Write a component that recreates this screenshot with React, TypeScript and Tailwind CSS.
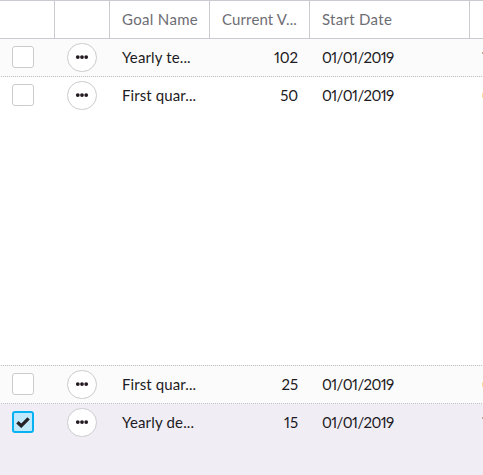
const GRID = "grid grid-cols-[55px_55px_100px_100px_160px_13px] shrink-0";

type RowProps = {
  name: string;
  nameClass: string;
  value: string;
  selected?: boolean;
  tone: string;
  edge: string;
};

function Row({ name, nameClass, value, selected, tone, edge }: RowProps) {
  return (
    <div className={`${GRID} ${tone} items-start text-[#1d1b23]`}>
      <div className="pl-3 pt-[7px]">
        <div
          className={`flex size-[22px] items-center justify-center rounded-[3px] ${
            selected ? "border-2 border-[#08b2f2] bg-[#c0eafc]" : "border border-[#cbcbcf] bg-white"
          }`}
        >
          {selected && (
            <svg className="h-[11px] w-[14px]" viewBox="0 0 14 11" fill="none" stroke="#252229" strokeWidth="3.3">
              <path d="M1.4 5.2 5.2 8.8 12.6 1.4" />
            </svg>
          )}
        </div>
      </div>
      <div className="pl-3 pt-1">
        <div className="flex h-[29px] w-[30px] items-center justify-center rounded-full border border-[#cbcbcf] bg-white">
          <svg className="h-[5px] w-[14px]" viewBox="0 0 14 5" fill="#221820">
            <circle cx="2.8" cy="2.1" r="1.9" />
            <circle cx="7" cy="2.1" r="1.9" />
            <circle cx="11.2" cy="2.1" r="1.9" />
          </svg>
        </div>
      </div>
      <div className="pl-3 leading-[37px]"><span className={nameClass}>{name}</span></div>
      <div className="pr-3 text-right leading-[37px] tracking-[-0.1px] proportional-nums">{value}</div>
      <div className="pl-3 leading-[37px] proportional-nums"><span className="tracking-[-0.6px]">01/01/2019</span></div>
      <div className={`flex justify-end ${edge}`} />
    </div>
  );
}

function DottedRule() {
  return <div className="h-px shrink-0 bg-[repeating-linear-gradient(90deg,#f7f7f7_0_1px,#bfbfc2_1px_2px)]" />;
}

export default function App() {
  return (
    <div className="flex h-[475px] w-[483px] flex-col overflow-hidden bg-white font-['Lato','Liberation_Sans',sans-serif] text-[15px]">
      <div className={`${GRID} h-[39px] border-y border-[#cacad0] leading-[37px] text-[#6d6d74] *:border-r *:border-[#cacad0] *:pl-3`}>
        <div />
        <div />
        <div><span className="tracking-[0.33px]">Goal Name</span></div>
        <div><span className="tracking-[0.13px]">Current V...</span></div>
        <div><span className="tracking-[0.3px]">Start Date</span></div>
        <div className="border-r-0!" />
      </div>
      <Row name="Yearly te..." nameClass="tracking-[0.13px]" value="102" tone="h-[37px] bg-[#fbfbfb]" edge="mt-[13px] h-[2px] ml-3 bg-[#c9a27d]" />
      <DottedRule />
      <Row name="First quar..." nameClass="tracking-[0.1px]" value="50" tone="h-[37px] bg-white" edge="mt-[16px] h-[5px] ml-3 bg-[#fbdc9c]" />
      <div className="flex-1" />
      <DottedRule />
      <Row name="First quar..." nameClass="tracking-[0.1px]" value="25" tone="h-[37px] bg-[#fbfbfb]" edge="mt-[16px] h-[5px] ml-3 bg-[#fbdc9c]" />
      <DottedRule />
      <Row name="Yearly de..." nameClass="tracking-[0.17px]" value="15" selected tone="h-[71px] bg-[#f0edf5]" edge="mt-[13px] h-[2px] ml-3 bg-[#c9a091]" />
    </div>
  );
}
